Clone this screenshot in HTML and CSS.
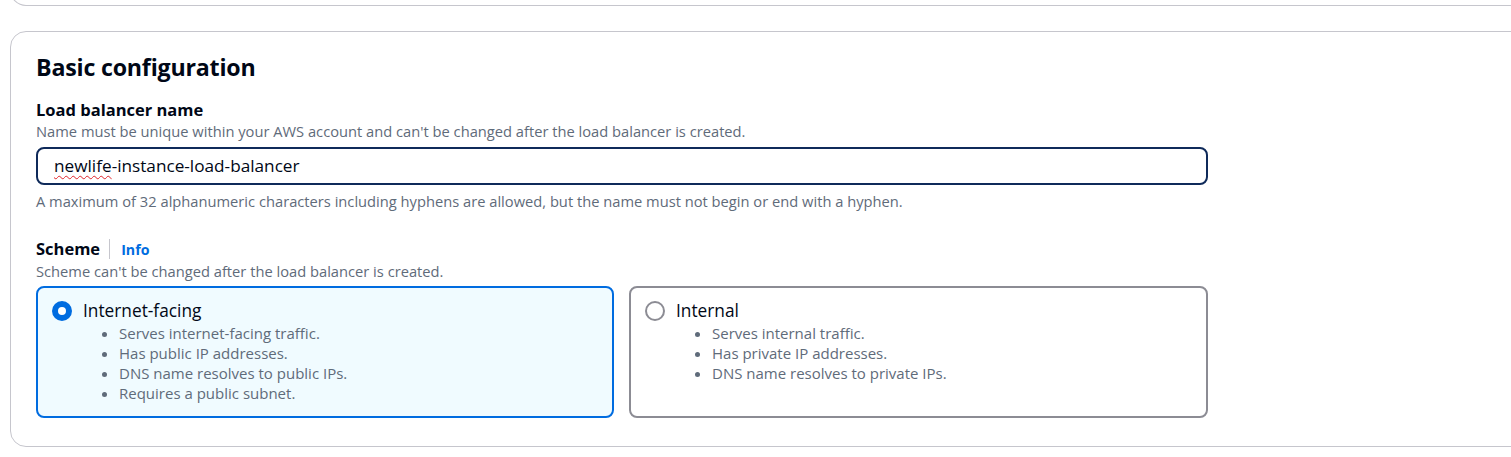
FILE: index.html
```html
<!DOCTYPE html>
<html lang="en">
<head>
<meta charset="utf-8">
<title>Basic configuration</title>
<link rel="stylesheet" href="styles.css">
</head>
<body>
<div class="page">
  <div class="card card-prev"></div>
  <section class="card card-main">
    <h2 class="title">Basic configuration</h2>

    <div class="field">
      <div class="label">Load balancer name</div>
      <div class="desc">Name must be unique within your AWS account and can't be changed after the load balancer is created.</div>
      <div class="input"><span class="spell">newlife</span>-instance-load-balancer</div>
      <div class="hint">A maximum of 32 alphanumeric characters including hyphens are allowed, but the name must not begin or end with a hyphen.</div>
    </div>

    <div class="field field-scheme">
      <div class="label-row"><span class="label">Scheme</span><span class="sep"></span><a class="info">Info</a></div>
      <div class="desc">Scheme can't be changed after the load balancer is created.</div>
      <div class="tiles">
        <div class="tile tile-on">
          <div class="tile-head"><span class="radio radio-on"></span><span class="tile-label">Internet-facing</span></div>
          <ul class="bullets">
            <li>Serves internet-facing traffic.</li>
            <li>Has public IP addresses.</li>
            <li>DNS name resolves to public IPs.</li>
            <li>Requires a public subnet.</li>
          </ul>
        </div>
        <div class="tile">
          <div class="tile-head"><span class="radio"></span><span class="tile-label">Internal</span></div>
          <ul class="bullets">
            <li>Serves internal traffic.</li>
            <li>Has private IP addresses.</li>
            <li>DNS name resolves to private IPs.</li>
          </ul>
        </div>
      </div>
    </div>
  </section>
</div>
</body>
</html>
```
FILE: styles.css
```css
html, body {
  margin: 0;
  padding: 0;
  background: #ffffff;
  overflow: hidden;
}
body {
  font-family: "Open Sans", "Noto Sans", sans-serif;
  color: #000716;
}
.page {
  padding-left: 10px;
  margin-right: -40px;
}
.card {
  border: 1px solid #c6c6cd;
  border-radius: 16px;
  background: #fff;
}
.card-prev {
  height: 40px;
  margin-top: -35px;
  border-top: none;
  border-radius: 0 0 16px 16px;
}
.card-main {
  margin-top: 25px;
  padding: 20px 25px 25px 25px;
  box-sizing: border-box;
  height: 416px;
}
.title {
  margin: 0;
  font-size: 23.2px;
  line-height: 30px;
  font-weight: 700;
  letter-spacing: -0.2px;
}
.field {
  width: 1172px;
  margin-top: 17px;
}
.label {
  font-size: 16.5px;
  line-height: 22px;
  font-weight: 700;
}
.desc, .hint {
  font-size: 14.7px;
  line-height: 20px;
  color: #5f6b7a;
}
.input {
  margin-top: 6px;
  height: 38px;
  box-sizing: border-box;
  border: 2px solid #0f2a5a;
  border-radius: 8px;
  padding: 0 16px;
  font-size: 17.2px;
  line-height: 34px;
  color: #000716;
}
.spell {
  text-decoration: underline wavy #e0242a;
  text-decoration-thickness: 1px;
  text-underline-offset: 3px;
}
.hint {
  margin-top: 6px;
}
.field-scheme {
  margin-top: 26px;
}
.label-row {
  display: flex;
  align-items: center;
  height: 24px;
}
.sep {
  width: 1px;
  height: 20px;
  background: #c6c6cd;
  margin: 0 11px 0 9px;
}
.info {
  color: #006ce0;
  font-weight: 700;
  font-size: 14.2px;
}
.tiles {
  margin-top: 5px;
  display: grid;
  grid-template-columns: 578px 579px;
  gap: 15px;
}
.tile {
  height: 132px;
  box-sizing: border-box;
  border: 2px solid #8c8c94;
  border-radius: 8px;
  padding: 12px 14px;
  background: #fff;
}
.tile-on {
  border-color: #006ce0;
  background: #f0fbff;
}
.tile-head {
  display: flex;
  align-items: center;
  gap: 11px;
  height: 22px;
}
.radio {
  width: 20px;
  height: 20px;
  box-sizing: border-box;
  border-radius: 50%;
  border: 2px solid #8c8c94;
  background: #fff;
  flex: none;
}
.radio-on {
  border: 6px solid #006ce0;
}
.tile-label {
  font-size: 17.3px;
  line-height: 22px;
}
.bullets {
  margin: 1px 0 0 0;
  padding-left: 67px;
  font-size: 15px;
  line-height: 20px;
  color: #5f6b7a;
}
.bullets li::marker {
  color: #5f6b7a;
}
```
